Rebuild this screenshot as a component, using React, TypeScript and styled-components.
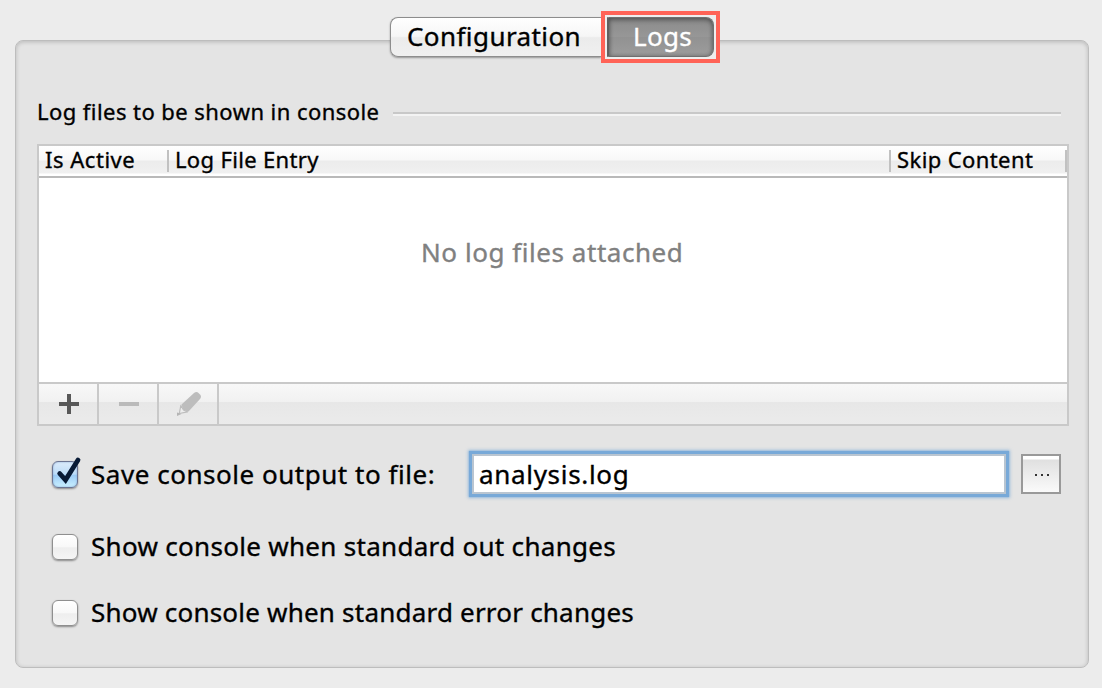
import React from "react";
import styled, { createGlobalStyle } from "styled-components";

const GlobalStyle = createGlobalStyle`
  html, body { margin: 0; padding: 0; background: #ececec; }
  * { box-sizing: border-box; }
  button, input { font: inherit; color: inherit; margin: 0; }
`;

const Window = styled.main`
  width: 1102px;
  height: 688px;
  padding: 11px 13px 20px 15px;
  display: flex;
  flex-direction: column;
  overflow: hidden;
  background: #ececec;
  color: #000;
  font-family: "Noto Sans", "Lucida Grande", sans-serif;
  font-size: 26px;
  -webkit-text-stroke-width: 0.35px;
`;

const Text = styled.span<{ $tracking?: number }>`
  white-space: nowrap;
  letter-spacing: ${(p) => p.$tracking ?? 0}px;
`;

const Tabs = styled.div`
  position: relative;
  z-index: 1;
  display: flex;
  height: 52px;
  margin: 0 0 -23px 375px;
`;

const Tab = styled.button`
  width: 211px;
  height: 40px;
  margin-top: 6px;
  padding: 0 0 2px 16px;
  border: solid #8d8d8d;
  border-width: 1px 0 1px 1px;
  border-radius: 8px 0 0 8px;
  background: linear-gradient(#fff 0%, #f6f6f6 48%, #ebebeb 52%, #f0f0f0 100%);
  box-shadow: 0 1px 2px rgba(0, 0, 0, 0.35);
  text-align: left;
  line-height: 36px;
`;

const Highlight = styled.div`
  width: 119px;
  height: 52px;
  padding: 2px 0 0 2px;
  border: 4px solid #ff6357;
  background: #eee;
`;

const ActiveTab = styled(Tab)`
  width: 107px;
  height: 40px;
  margin: 0;
  padding-left: 24px;
  border: 1px solid #6f6f6f;
  border-left: 2px solid #606060;
  border-radius: 0 8px 8px 0;
  background: linear-gradient(#8b8b8b, #979797 50%, #929292 51%, #9c9c9c);
  box-shadow: inset 0 2px 5px rgba(0, 0, 0, 0.32), inset 0 0 4px rgba(0, 0, 0, 0.22);
  color: #fff;
`;

const Panel = styled.section`
  flex: none;
  height: 628px;
  padding: 55px 19px 0 21px;
  border: 1px solid #bdbdbd;
  border-radius: 8px;
  background: #e4e4e4;
  box-shadow: inset 0 1px 4px rgba(0, 0, 0, 0.2);
`;

const SectionTitle = styled.h2`
  display: flex;
  align-items: center;
  height: 30px;
  margin: 0 8px 18px 0;
  font-size: 22px;
  font-weight: 400;
  line-height: 30px;
`;

const Rule = styled.div`
  width: 668px;
  height: 4px;
  margin: 5px 0 0 auto;
  border-top: 2px solid #c8c8c8;
  background: #f3f3f3;
`;

const Table = styled.div`
  width: 1032px;
  height: 282px;
  display: flex;
  flex-direction: column;
  border: 2px solid #c9c9c9;
  background: #fff;
`;

const HeaderRow = styled.div`
  display: flex;
  height: 32px;
  padding-top: 4px;
  border-bottom: 2px solid #b9b9b9;
  background: linear-gradient(#fff 0, #f8f8f8 14px, #ececec 15px, #f0f0f0 27px, #fff 28px);
  font-size: 22px;
`;

const HeaderCell = styled.div<{ $width: number }>`
  width: ${(p) => p.$width}px;
  height: 22px;
  padding-left: 6px;
  border-right: 2px solid #c1c1c1;
  line-height: 19px;
`;

const EmptyBody = styled.div`
  flex: 1;
  padding: 56px 0 0 382px;
  color: #808080;
  line-height: 36px;
`;

const Toolbar = styled.div`
  display: flex;
  height: 42px;
  border-top: 2px solid #c9c9c9;
  background: linear-gradient(#f8f8f8 0, #f1f1f1 18px, #e7e7e7 18px, #ebebeb 40px);
`;

const ToolButton = styled.button`
  width: 60px;
  height: 40px;
  padding: 0;
  border: 0;
  border-right: 2px solid #c9c9c9;
  background: transparent;
  svg { display: block; }
`;

const Options = styled.div`
  padding: 21px 0 0 15px;
`;

const Option = styled.label<{ $gap?: number }>`
  display: flex;
  align-items: center;
  height: 54px;
  margin-bottom: ${(p) => p.$gap ?? 0}px;
`;

const OptionText = styled(Text)<{ $drop?: number }>`
  margin-top: ${(p) => p.$drop ?? 0}px;
  padding-bottom: 2px;
  line-height: 36px;
`;

const CheckBox = styled.span<{ $checked?: boolean }>`
  flex: none;
  width: 26px;
  height: ${(p) => (p.$checked ? 27 : 26)}px;
  margin-right: 13px;
  margin-bottom: ${(p) => (p.$checked ? 0 : 1)}px;
  border: 1px solid ${(p) => (p.$checked ? "#6c7593" : "#8f8f8f")};
  border-radius: 6px;
  background: ${(p) =>
    p.$checked
      ? "linear-gradient(#dcecfb, #bddcf8 48%, #9dccf6 54%, #c9f0ff)"
      : "linear-gradient(#fff, #f8f8f8 48%, #eeeeee 54%, #f5f5f5)"};
  box-shadow: 0 1px 2px rgba(0, 0, 0, 0.4)${(p) => (p.$checked ? ", inset 0 0 2px #7f9fce" : "")};
  svg { display: block; overflow: visible; }
`;

const FileInput = styled.input`
  width: 534px;
  height: 40px;
  margin-left: auto;
  padding: 0 6px 1px 5px;
  border: 2px solid #b9c5d1;
  border-radius: 0;
  outline: 0;
  background: #fff;
  box-shadow: 0 0 1px 3px #78a9d8, 0 0 3px 4px rgba(120, 169, 216, 0.65);
  letter-spacing: 0.68px;
`;

const BrowseButton = styled.button`
  width: 40px;
  height: 40px;
  margin: 0 8px 0 15px;
  padding: 0;
  border: 2px solid #999;
  background: linear-gradient(#fff 0, #fff 3px, #e0e0e0 4px, #fafafa 36px);
  svg { display: block; }
`;

export default function App() {
  return (
    <Window>
      <GlobalStyle />
      <Tabs>
        <Tab><Text $tracking={0.42}>Configuration</Text></Tab>
        <Highlight>
          <ActiveTab><Text $tracking={0.3}>Logs</Text></ActiveTab>
        </Highlight>
      </Tabs>
      <Panel>
        <SectionTitle>
          <Text $tracking={0.44}>Log files to be shown in console</Text>
          <Rule />
        </SectionTitle>
        <Table>
          <HeaderRow>
            <HeaderCell $width={130}><Text $tracking={0.52}>Is Active</Text></HeaderCell>
            <HeaderCell $width={722}><Text $tracking={0.34}>Log File Entry</Text></HeaderCell>
            <HeaderCell $width={176}><Text $tracking={0.4}>Skip Content</Text></HeaderCell>
          </HeaderRow>
          <EmptyBody><Text $tracking={0.55}>No log files attached</Text></EmptyBody>
          <Toolbar>
            <ToolButton aria-label="Add">
              <svg width="58" height="40"><path d="M20 20H40M30 10V30" stroke="#585858" strokeWidth="4" /></svg>
            </ToolButton>
            <ToolButton aria-label="Remove">
              <svg width="58" height="40"><path d="M20 20H40" stroke="#bababa" strokeWidth="4" /></svg>
            </ToolButton>
            <ToolButton aria-label="Edit">
              <svg width="58" height="40">
                <path d="M22.5 20.5L35 9Q37.5 7 39.5 9L41 10.5Q43 12.5 41 15L29.5 27.5L24 26Z" fill="#bdbdbd" />
                <path d="M21.8 21.5L20.3 29.5L28.5 27.8L24.5 26Z" fill="#ededed" stroke="#bdbdbd" strokeWidth="1.2" strokeLinejoin="round" />
                <path d="M18 28.5L22.5 30L18 32Z" fill="#b5b5b5" />
              </svg>
            </ToolButton>
          </Toolbar>
        </Table>
        <Options>
          <Option $gap={19}>
            <CheckBox $checked>
              <svg width="24" height="25">
                <path d="M6.7 11.5L12.5 18L25 -2" fill="none" stroke="#081a35" strokeWidth="4.8" strokeLinecap="round" />
              </svg>
            </CheckBox>
            <OptionText $drop={2} $tracking={0.53}>Save console output to file:</OptionText>
            <FileInput defaultValue="analysis.log" />
            <BrowseButton aria-label="Browse">
              <svg width="36" height="36"><path d="M12 19h2M18 19h2M24 19h2" stroke="#333" strokeWidth="2" /></svg>
            </BrowseButton>
          </Option>
          <Option $gap={12}>
            <CheckBox />
            <OptionText $tracking={0.3}>Show console when standard out changes</OptionText>
          </Option>
          <Option>
            <CheckBox />
            <OptionText $tracking={0.21}>Show console when standard error changes</OptionText>
          </Option>
        </Options>
      </Panel>
    </Window>
  );
}
